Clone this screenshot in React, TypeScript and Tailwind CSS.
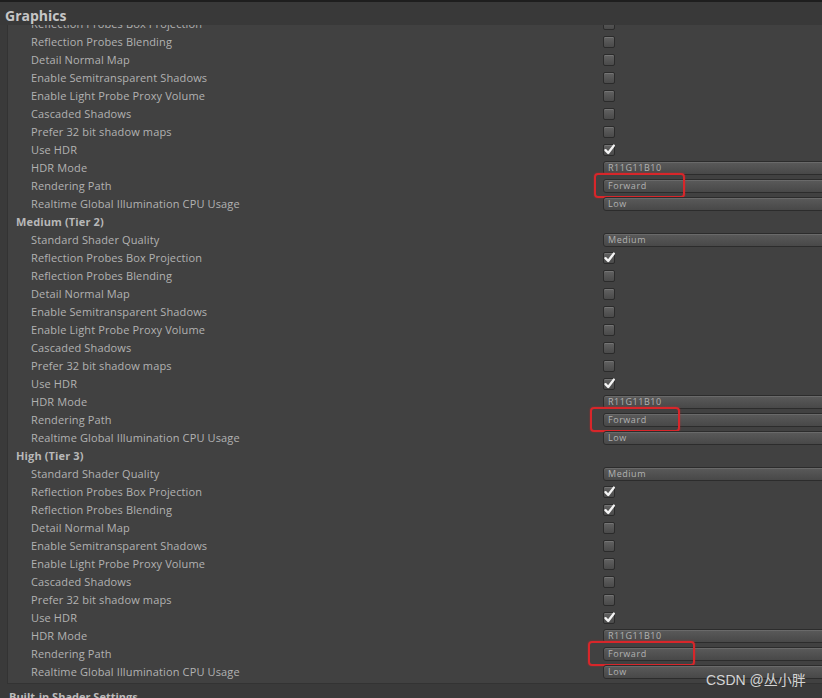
type Row =
  | { kind: "heading"; label: string }
  | { kind: "check"; label: string; checked: boolean }
  | { kind: "select"; label: string; value: string; mark?: boolean };

const tierRows = (
  shader: boolean,
  boxProj: boolean,
  blending: boolean
): Row[] => {
  const rows: Row[] = [];
  if (shader) rows.push({ kind: "select", label: "Standard Shader Quality", value: "Medium" });
  rows.push(
    { kind: "check", label: "Reflection Probes Box Projection", checked: boxProj },
    { kind: "check", label: "Reflection Probes Blending", checked: blending },
    { kind: "check", label: "Detail Normal Map", checked: false },
    { kind: "check", label: "Enable Semitransparent Shadows", checked: false },
    { kind: "check", label: "Enable Light Probe Proxy Volume", checked: false },
    { kind: "check", label: "Cascaded Shadows", checked: false },
    { kind: "check", label: "Prefer 32 bit shadow maps", checked: false },
    { kind: "check", label: "Use HDR", checked: true },
    { kind: "select", label: "HDR Mode", value: "R11G11B10" },
    { kind: "select", label: "Rendering Path", value: "Forward", mark: true },
    { kind: "select", label: "Realtime Global Illumination CPU Usage", value: "Low" }
  );
  return rows;
};

const rows: Row[] = [
  ...tierRows(false, false, false),
  { kind: "heading", label: "Medium (Tier 2)" },
  ...tierRows(true, true, false),
  { kind: "heading", label: "High (Tier 3)" },
  ...tierRows(true, true, true),
];

const markWidths = ["w-[91px] -ml-[9px]", "w-[90px] -ml-[13px]", "w-[107px] -ml-[15px]"];

const Checkbox = ({ checked }: { checked: boolean }) => (
  <div className="relative h-[12px] w-[12px] rounded-[2px] border border-[#2b2b2b] bg-gradient-to-b from-[#626262] to-[#4a4a4a] shadow-[inset_0_1px_0_rgba(255,255,255,0.12)]">
    {checked && (
      <svg viewBox="0 0 12 12" className="absolute -left-[1px] -top-[2px] h-[13px] w-[13px]">
        <path
          d="M2.3 6.6 L4.8 9.2 L10 2.4"
          fill="none"
          stroke="#f4f4f4"
          strokeWidth="2.2"
          strokeLinecap="round"
          strokeLinejoin="round"
        />
      </svg>
    )}
  </div>
);

const Dropdown = ({ value, markClass }: { value: string; markClass?: string }) => (
  <div className="relative flex-1">
    <div className="-mr-[20px] flex h-[14px] items-center rounded-[3px] border border-[#2c2c2c] bg-gradient-to-b from-[#5a5a5a] to-[#484848] pl-[4px] text-[9px] tracking-[0.06em] text-[#b2b2b2] shadow-[inset_0_1px_0_rgba(255,255,255,0.1)]">
      {value}
    </div>
    {markClass && (
      <div
        className={`pointer-events-none absolute -top-[6px] h-[25px] rounded-[4px] border-2 border-[#d8262a] shadow-[0_0_2px_rgba(220,40,40,0.6)] ${markClass}`}
      />
    )}
  </div>
);

export default function App() {
  let markIndex = 0;
  return (
    <div
      className="relative h-[698px] w-[822px] overflow-hidden bg-[#3a3a3a]"
      style={{ fontFamily: '"Open Sans", "Noto Sans", sans-serif' }}
    >
      <div className="h-[2px] bg-[#1e1e1e]" />
      <div className="relative z-10 flex h-[23px] items-end bg-[#393939] pl-[5px] text-[14px] font-bold leading-[18px] text-[#c6c6c6]">
        Graphics
      </div>
      <div className="-mt-[10px] ml-[7px] border-b border-l border-[#333333] bg-[#414141] pb-[2px]">
        {rows.map((row, i) => {
          if (row.kind === "heading") {
            return (
              <div
                key={i}
                className="flex h-[18px] items-center pl-[8px] text-[11px] font-bold tracking-[0.012em] text-[#b8b8b8]"
              >
                {row.label}
              </div>
            );
          }
          const markClass = row.kind === "select" && row.mark ? markWidths[markIndex++] : undefined;
          return (
            <div key={i} className="flex h-[18px] items-center">
              <div className="w-[595px] shrink-0 pl-[23px] text-[11px] tracking-[0.012em] text-[#b2b2b2]">
                {row.label}
              </div>
              {row.kind === "check" ? (
                <Checkbox checked={row.checked} />
              ) : (
                <Dropdown value={row.value} markClass={markClass} />
              )}
            </div>
          );
        })}
      </div>
      <div className="pl-[9px] pt-[5px] text-[11px] font-bold text-[#bcbcbc]">
        Built-in Shader Settings
      </div>
      <div
        className="absolute left-[706px] top-[670px] text-[14px] text-[#d4d4d4]"
        style={{ fontFamily: '"Liberation Sans", "Noto Sans CJK SC", sans-serif' }}
      >
        CSDN @丛小胖
      </div>
    </div>
  );
}
